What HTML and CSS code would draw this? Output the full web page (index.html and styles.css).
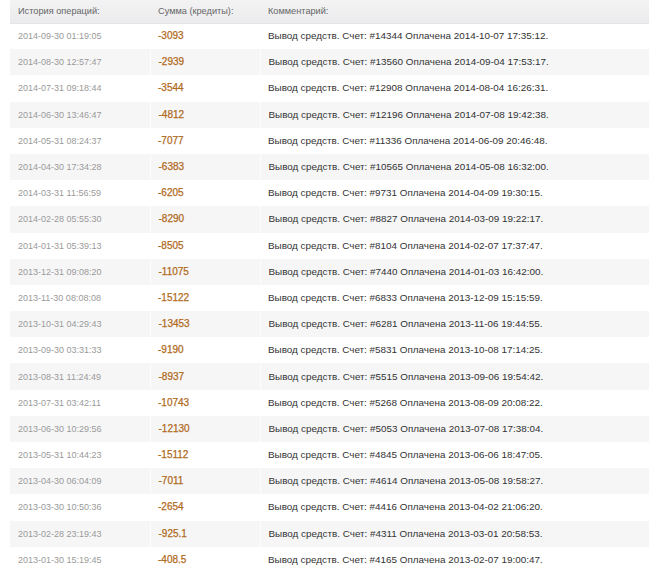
FILE: index.html
```html
<!DOCTYPE html>
<html lang="ru">
<head>
<meta charset="utf-8">
<link rel="stylesheet" href="styles.css">
</head>
<body>
<table class="ops">
  <colgroup><col class="c-date"><col class="c-sum"><col class="c-com"></colgroup>
  <thead>
    <tr><th>История операций:</th><th>Сумма (кредиты):</th><th>Комментарий:</th></tr>
  </thead>
  <tbody>
    <tr><td class="date">2014-09-30 01:19:05</td><td class="sum">-3093</td><td class="com">Вывод средств. Счет: #14344 Оплачена 2014-10-07 17:35:12.</td></tr>
    <tr><td class="date">2014-08-30 12:57:47</td><td class="sum">-2939</td><td class="com">Вывод средств. Счет: #13560 Оплачена 2014-09-04 17:53:17.</td></tr>
    <tr><td class="date">2014-07-31 09:18:44</td><td class="sum">-3544</td><td class="com">Вывод средств. Счет: #12908 Оплачена 2014-08-04 16:26:31.</td></tr>
    <tr><td class="date">2014-06-30 13:46:47</td><td class="sum">-4812</td><td class="com">Вывод средств. Счет: #12196 Оплачена 2014-07-08 19:42:38.</td></tr>
    <tr><td class="date">2014-05-31 08:24:37</td><td class="sum">-7077</td><td class="com">Вывод средств. Счет: #11336 Оплачена 2014-06-09 20:46:48.</td></tr>
    <tr><td class="date">2014-04-30 17:34:28</td><td class="sum">-6383</td><td class="com">Вывод средств. Счет: #10565 Оплачена 2014-05-08 16:32:00.</td></tr>
    <tr><td class="date">2014-03-31 11:56:59</td><td class="sum">-6205</td><td class="com">Вывод средств. Счет: #9731 Оплачена 2014-04-09 19:30:15.</td></tr>
    <tr><td class="date">2014-02-28 05:55:30</td><td class="sum">-8290</td><td class="com">Вывод средств. Счет: #8827 Оплачена 2014-03-09 19:22:17.</td></tr>
    <tr><td class="date">2014-01-31 05:39:13</td><td class="sum">-8505</td><td class="com">Вывод средств. Счет: #8104 Оплачена 2014-02-07 17:37:47.</td></tr>
    <tr><td class="date">2013-12-31 09:08:20</td><td class="sum">-11075</td><td class="com">Вывод средств. Счет: #7440 Оплачена 2014-01-03 16:42:00.</td></tr>
    <tr><td class="date">2013-11-30 08:08:08</td><td class="sum">-15122</td><td class="com">Вывод средств. Счет: #6833 Оплачена 2013-12-09 15:15:59.</td></tr>
    <tr><td class="date">2013-10-31 04:29:43</td><td class="sum">-13453</td><td class="com">Вывод средств. Счет: #6281 Оплачена 2013-11-06 19:44:55.</td></tr>
    <tr><td class="date">2013-09-30 03:31:33</td><td class="sum">-9190</td><td class="com">Вывод средств. Счет: #5831 Оплачена 2013-10-08 17:14:25.</td></tr>
    <tr><td class="date">2013-08-31 11:24:49</td><td class="sum">-8937</td><td class="com">Вывод средств. Счет: #5515 Оплачена 2013-09-06 19:54:42.</td></tr>
    <tr><td class="date">2013-07-31 03:42:11</td><td class="sum">-10743</td><td class="com">Вывод средств. Счет: #5268 Оплачена 2013-08-09 20:08:22.</td></tr>
    <tr><td class="date">2013-06-30 10:29:56</td><td class="sum">-12130</td><td class="com">Вывод средств. Счет: #5053 Оплачена 2013-07-08 17:38:04.</td></tr>
    <tr><td class="date">2013-05-31 10:44:23</td><td class="sum">-15112</td><td class="com">Вывод средств. Счет: #4845 Оплачена 2013-06-06 18:47:05.</td></tr>
    <tr><td class="date">2013-04-30 06:04:09</td><td class="sum">-7011</td><td class="com">Вывод средств. Счет: #4614 Оплачена 2013-05-08 19:58:27.</td></tr>
    <tr><td class="date">2013-03-30 10:50:36</td><td class="sum">-2654</td><td class="com">Вывод средств. Счет: #4416 Оплачена 2013-04-02 21:06:20.</td></tr>
    <tr><td class="date">2013-02-28 23:19:43</td><td class="sum">-925.1</td><td class="com">Вывод средств. Счет: #4311 Оплачена 2013-03-01 20:58:53.</td></tr>
    <tr><td class="date">2013-01-30 15:19:45</td><td class="sum">-408.5</td><td class="com">Вывод средств. Счет: #4165 Оплачена 2013-02-07 19:00:47.</td></tr>
  </tbody>
</table>
</body>
</html>
```

FILE: styles.css
```css
html, body {
  margin: 0;
  padding: 0;
  background: #fff;
}
body {
  padding: 0 10px;
  font-family: "Liberation Sans", Arial, sans-serif;
}
.ops {
  width: 639px;
  border-collapse: collapse;
  table-layout: fixed;
}
.c-date { width: 140px; }
.c-sum { width: 110px; }
.ops th {
  height: 23px;
  box-sizing: border-box;
  padding: 0 0 1px 8px;
  line-height: 12px;
  text-align: left;
  font-weight: normal;
  font-size: 9.2px;
  color: #666;
  background: linear-gradient(#f3f3f4, #ebebed);
  border-bottom: 1px solid #e4e4e6;
}
.ops td {
  height: 26.2px;
  box-sizing: border-box;
  padding: 0 0 0 8px;
  line-height: 12px;
  vertical-align: middle;
  white-space: nowrap;
}
.ops tbody tr:nth-child(even) td {
  background: #f6f6f7;
}
.ops tbody tr:nth-child(even) td + td {
  border-left: 1px solid #fdfdfd;
}
.date {
  font-size: 9px;
  color: #9a9a9a;
}
.sum {
  font-size: 10px;
  color: #b06a1c;
  -webkit-text-stroke: 0.25px #b06a1c;
}
.com {
  font-size: 9.9px;
  color: #333;
}
```
